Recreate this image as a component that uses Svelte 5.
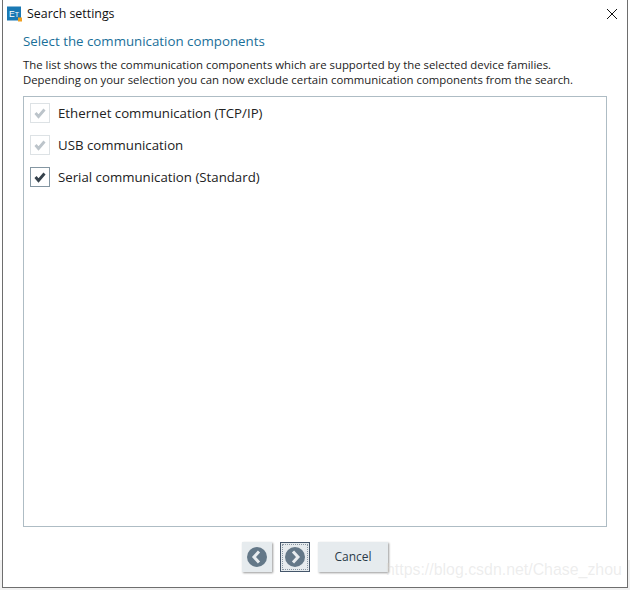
<script>
  const items = [
    { label: "Ethernet communication (TCP/IP)", locked: true },
    { label: "USB communication", locked: true },
    { label: "Serial communication (Standard)", locked: false }
  ];
</script>

<div class="page">
  <div class="window">
    <header class="titlebar">
      <svg class="app-icon" width="16" height="16" viewBox="0 0 16 16">
        <rect x="0" y="0.5" width="14" height="14" fill="#1a79b4" />
        <text x="2" y="10.5" class="app-icon-text">E<tspan class="app-icon-small">T</tspan></text>
        <rect x="11" y="11.5" width="4" height="4" fill="#f0a020" />
      </svg>
      <span class="title">Search settings</span>
      <svg class="close" width="12" height="12" viewBox="0 0 12 12">
        <path d="M1 1 L11 11 M11 1 L1 11" stroke="#111" stroke-width="1" fill="none" />
      </svg>
    </header>

    <main class="content">
      <h2 class="heading">Select the communication components</h2>
      <p class="desc">
        The list shows the communication components which are supported by the selected device families.<br />
        Depending on your selection you can now exclude certain communication components from the search.
      </p>

      <div class="list">
        {#each items as item}
          <div class="row">
            <span class="box" class:locked={item.locked}>
              <svg width="12" height="12" viewBox="0 0 12 12">
                <path d="M1.5 6 L4.5 9.5 L10.5 2.5" fill="none" stroke-width="2.8" stroke={item.locked ? "#bcc4ca" : "#36424c"} />
              </svg>
            </span>
            <span class="label">{item.label}</span>
          </div>
        {/each}
      </div>
    </main>

    <footer class="buttons">
      <button class="btn icon-btn" aria-label="Back">
        <svg width="22" height="22" viewBox="0 0 22 22">
          <circle cx="11" cy="11" r="10" fill="#647888" />
          <path d="M13 5.5 L8 11 L13 16.5" fill="none" stroke="#e8ecef" stroke-width="3" />
        </svg>
      </button>
      <button class="btn icon-btn focused" aria-label="Next">
        <span class="focus-ring">
          <svg width="22" height="22" viewBox="0 0 22 22">
            <circle cx="11" cy="11" r="10" fill="#647888" />
            <path d="M9 5.5 L14 11 L9 16.5" fill="none" stroke="#e8ecef" stroke-width="3" />
          </svg>
        </span>
      </button>
      <button class="btn cancel">Cancel</button>
    </footer>
  </div>
  <span class="watermark">https://blog.csdn.net/Chase_zhou</span>
</div>

<style>
  :global(body) {
    margin: 0;
    background: #f0f0f0;
  }

  .page {
    position: relative;
    width: 630px;
    height: 590px;
    overflow: hidden;
    padding: 0 2px 2px 2px;
    box-sizing: border-box;
    font-family: "Open Sans", "Noto Sans", sans-serif;
    background: linear-gradient(#fff 560px, #f0f0f0 560px);
  }

  .window {
    height: 100%;
    box-sizing: border-box;
    background: #fff;
    border: 1px solid #6e6e6e;
    border-top: none;
    display: flex;
    flex-direction: column;
  }

  .titlebar {
    height: 27px;
    display: flex;
    align-items: center;
    padding: 0 9px 0 4px;
    gap: 4px;
  }

  .app-icon-text {
    font-size: 8.5px;
    fill: #fff;
    font-family: "Liberation Sans", sans-serif;
  }

  .app-icon-small {
    font-size: 7px;
  }

  .title {
    font-size: 12.4px;
    color: #111;
    flex: 1;
  }

  .content {
    flex: 1;
    min-height: 0;
    display: flex;
    flex-direction: column;
    padding: 5px 20px 0 20px;
  }

  .heading {
    margin: 0;
    font-size: 13.3px;
    font-weight: 400;
    line-height: 18px;
    color: #1a6f99;
  }

  .desc {
    margin: 7px 0 9px 0;
    font-size: 11.37px;
    line-height: 15px;
    color: #222;
  }

  .list {
    flex: 1;
    border: 1px solid #aebcc4;
    padding: 6px 6px;
    display: flex;
    flex-direction: column;
    gap: 12px;
  }

  .row {
    display: flex;
    align-items: center;
    gap: 8px;
    height: 20px;
  }

  .box {
    width: 18px;
    height: 18px;
    border: 1px solid #8496a2;
    display: flex;
    align-items: center;
    justify-content: center;
  }

  .box.locked {
    border-color: #dde2e5;
  }

  .label {
    font-size: 13.25px;
    color: #222;
  }

  .buttons {
    height: 60px;
    display: flex;
    justify-content: center;
    align-items: flex-start;
    gap: 8px;
    padding-top: 15px;
    box-sizing: border-box;
  }

  .btn {
    height: 30px;
    background: #e6ebee;
    border: none;
    padding: 0;
    box-shadow: 1px 1px 2px #999;
    display: flex;
    align-items: center;
    justify-content: center;
    font-family: inherit;
  }

  .icon-btn {
    width: 30px;
  }

  .focused {
    background: #e6ebee;
    border: 1px solid #44566a;
    box-shadow: none;
  }

  .focus-ring {
    width: 26px;
    height: 26px;
    border: 1px dotted #8896a2;
    box-sizing: border-box;
    display: flex;
    align-items: center;
    justify-content: center;
  }

  .cancel {
    width: 70px;
    font-size: 12px;
    color: #2a3a48;
    padding-bottom: 1px;
  }

  .watermark {
    position: absolute;
    left: 386px;
    top: 561px;
    font-family: "Liberation Sans", sans-serif;
    font-size: 15.9px;
    color: rgba(215, 215, 215, 0.45);
    white-space: nowrap;
  }
</style>
